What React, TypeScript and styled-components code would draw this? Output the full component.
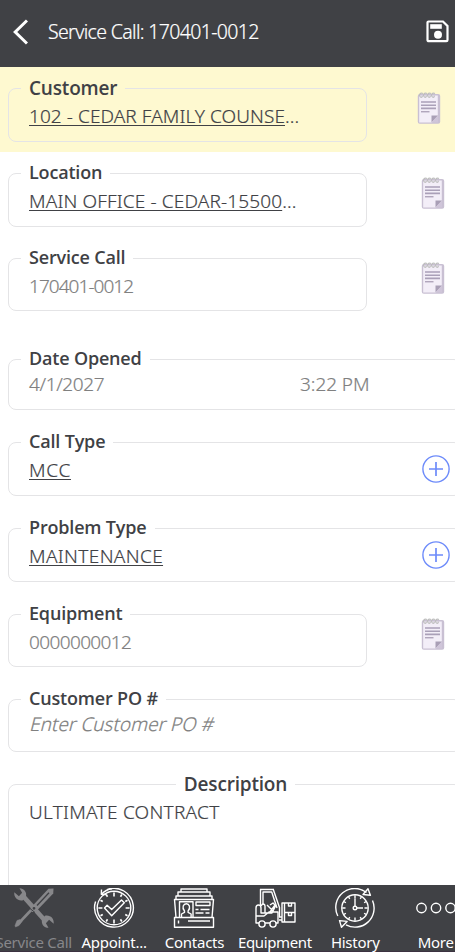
import React from 'react';
import styled, { createGlobalStyle, css } from 'styled-components';

const GlobalStyle = createGlobalStyle`
  *, *::before, *::after { box-sizing: border-box; }
  body { margin: 0; background: #fff; overflow: hidden; }
`;

const Screen = styled.div`
  display: flex;
  flex-direction: column;
  width: 455px;
  height: 952px;
  overflow: hidden;
  background: #fff;
  color: #404145;
  font-family: 'Open Sans', 'Noto Sans', sans-serif;
`;

const Header = styled.header`
  display: flex;
  align-items: center;
  flex: none;
  height: 67px;
  padding: 0 6px 4px 13px;
  background: #404145;
  color: #fff;
`;

const Title = styled.h1`
  flex: 1;
  margin: 1px 0 0 20px;
  font-family: 'Noto Sans', sans-serif;
  font-size: 19.5px;
  font-weight: 300;
  line-height: 28px;
  letter-spacing: -0.65px;
  white-space: nowrap;
  -webkit-text-stroke: 0.2px currentColor;
`;

const IconButton = styled.button`
  display: flex;
  flex: none;
  padding: 0;
  border: 0;
  background: none;
  color: inherit;
`;

const Form = styled.main`
  display: flex;
  flex-direction: column;
  flex: 1;
  min-height: 0;
  overflow: hidden;
`;

const Row = styled.section<{ $height: number; $active?: boolean }>`
  display: flex;
  justify-content: space-between;
  align-items: flex-start;
  flex: none;
  height: ${(p) => p.$height}px;
  padding: 11px ${(p) => (p.$active ? 14 : 10)}px 0 8px;
  background: ${(p) => (p.$active ? '#fef9d0' : 'transparent')};
`;

const Fieldset = styled.fieldset<{ $height: number; $wide?: boolean }>`
  flex: none;
  width: ${(p) => (p.$wide ? 454 : 359)}px;
  height: ${(p) => p.$height + 10}px;
  min-width: 0;
  margin: 0;
  padding: 0 11px 0 12px;
  border: 1px solid #e4e4e6;
  border-radius: 8px;
`;

const Legend = styled.legend<{ $large?: boolean; $centered?: boolean }>`
  height: 20px;
  padding: 0 8px;
  font-size: ${(p) => (p.$large ? 19 : 18)}px;
  font-weight: 600;
  line-height: ${(p) => (p.$large ? 21 : 19)}px;
  letter-spacing: -0.18px;
  white-space: nowrap;
  ${(p) => p.$centered && css`margin: 0 auto;`}
`;

const FieldBody = styled.div<{ $tight?: boolean }>`
  display: flex;
  align-items: flex-start;
  justify-content: space-between;
  padding: ${(p) => (p.$tight ? 2 : 5)}px 0 0 8px;
`;

const Value = styled.span<{ $spacing: number; $muted?: boolean; $half?: boolean }>`
  flex: ${(p) => (p.$half ? '0 0 271px' : '1')};
  font-family: 'Noto Sans', sans-serif;
  font-size: 19px;
  font-weight: 300;
  line-height: 26px;
  letter-spacing: ${(p) => p.$spacing}px;
  white-space: nowrap;
  color: ${(p) => (p.$muted ? '#808080' : '#404145')};
  -webkit-text-stroke: 0.2px currentColor;
`;

const Placeholder = styled(Value)`
  color: #808080;
  transform: skewX(-14deg);
  transform-origin: 0 20px;
`;

const Link = styled.a`
  text-decoration: underline;
  text-decoration-thickness: 1px;
  text-underline-offset: 2px;
  text-decoration-skip-ink: none;
`;

const NoteButton = styled(IconButton)`
  margin-top: 14px;
`;

const AddButton = styled(IconButton)`
  margin-top: -2px;
  color: #6d8bfa;
`;

const TabBar = styled.nav`
  display: flex;
  flex: none;
  height: 67px;
  margin-left: -6.5px;
  width: 483px;
  background: #404145;
  border-bottom: 1px solid #3c3240;
`;

const Tab = styled.div<{ $active?: boolean }>`
  display: flex;
  flex-direction: column;
  align-items: center;
  flex: none;
  width: 80.4px;
  padding-top: 3px;
  color: ${(p) => (p.$active ? '#87878a' : '#fff')};
`;

const TabLabel = styled.span<{ $spacing?: number }>`
  margin-top: 4px;
  font-family: 'Noto Sans', sans-serif;
  font-size: 15px;
  font-weight: 400;
  line-height: 20px;
  letter-spacing: ${(p) => p.$spacing ?? -0.25}px;
  white-space: nowrap;
`;

const BackIcon = () => (
  <svg width="15" height="28" viewBox="0 0 15 28" fill="none" stroke="currentColor" strokeWidth="3">
    <path d="M14 2.5 2.2 14 14 25.5" />
  </svg>
);

const SaveIcon = () => (
  <svg width="23" height="23" viewBox="0 0 23 23" fill="none">
    <path d="M2.5 1.5H17l4.5 4.5v14a1.2 1.2 0 0 1-1.2 1.2H2.7a1.2 1.2 0 0 1-1.2-1.2V2.5a1 1 0 0 1 1-1Z" stroke="currentColor" strokeWidth="2.2" />
    <path d="M4.2 4.2h11.6v4.6H4.2z" fill="currentColor" />
    <circle cx="12" cy="14.7" r="4" fill="currentColor" />
  </svg>
);

const NoteIcon = () => (
  <svg width="24" height="33" viewBox="0 0 24 33" fill="none">
    <rect x=".8" y="2" width="22.4" height="29.8" rx="2" fill="#c9c0d3" />
    <path d="M2.2 3.5h18.6V24l-6 6.4H2.2z" fill="#f3eef8" />
    <path d="M14.5 30.5v-7H21z" fill="#a99fb6" />
    <path d="M14.5 30.5 21 23.5v7z" fill="#cfc5d9" />
    <path d="M4 10h15M4 13.2h15M4 16.4h15" stroke="#aaa0b8" strokeWidth="1.6" />
    <path d="M4 19.8h8.5" stroke="#9488a3" strokeWidth="1" />
    {[3, 7, 11, 15].map((x) => (
      <path key={x} d={`M${x + 3} 1.5C${x} .2 ${x - 1} 3 ${x} 4.5s2.5.8 2.2-.8`} stroke="#bdbdbd" strokeWidth="1.2" />
    ))}
  </svg>
);

const AddIcon = () => (
  <svg width="28" height="28" viewBox="0 0 28 28" fill="none" stroke="currentColor" strokeWidth="1.4">
    <circle cx="14" cy="14" r="13.1" />
    <path d="M14 7v14M7 14h14" strokeWidth="1.7" />
  </svg>
);

const TabSvg = styled.svg.attrs({ width: 42, height: 40, viewBox: '0 0 42 40' })`
  flex: none;
  fill: none;
  stroke: currentColor;
  stroke-width: 1.4;
  stroke-linejoin: round;
`;

const ToolsIcon = () => (
  <TabSvg>
    <path d="M10.5 8.5 31 31.5" strokeWidth="4.6" />
    <path d="M6.5.3C11 .3 14 4 13 8.6L10 12.2C5 13.4.6 9.5 1.3 4.3l4.6 3.9 3.2-3.4Z" fill="currentColor" stroke="none" />
    <path d="M35.5 39.7c-4.5 0-7.5-3.7-6.5-8.3l3-3.6c5-1.2 9.4 2.7 8.7 7.9l-4.6-3.9-3.2 3.4Z" fill="currentColor" stroke="none" />
    <path d="m5 36 16-17" strokeWidth="2.6" />
    <path d="m2 37.5 2-5 3-1 2 2-3 4-3.5 1.5Z" fill="currentColor" strokeWidth=".5" />
    <path d="M17.5 20 35.5.8l5-.3-.3 5L23 23.5l-4 .5Z" fill="currentColor" stroke="none" />
    <path d="m24 17.5 12-12.8" stroke="#404145" strokeWidth="1.3" />
    <path d="m17 20.5 5 4" stroke="#404145" strokeWidth="1" />
    <circle cx="21" cy="20.3" r=".7" stroke="#404145" />
  </TabSvg>
);

const ticks = (count: number, outer: number, long: number, short: number) =>
  Array.from({ length: count }, (_, i) => {
    const a = (i * 2 * Math.PI) / count;
    const inner = outer - (i % 3 === 0 ? long : short);
    return `M${21 + outer * Math.sin(a)} ${20 - outer * Math.cos(a)}L${21 + inner * Math.sin(a)} ${20 - inner * Math.cos(a)}`;
  }).join('');

const AppointmentIcon = () => (
  <TabSvg>
    <path d="M14 1.6A19.4 19.4 0 1 1 2.6 13.5" />
    <circle cx="21" cy="20" r="16.8" />
    <path d={ticks(12, 15.6, 4, 2.6)} strokeWidth="1.6" />
    <path d="m8.5 1.5-.2 4.8 5 .2M8.5 6.2C11 3.5 15 1.3 19 .8" />
    <path d="m11.5 20 2.6-2.8 4.6 4.4L28.5 12l2.8 2.8-12.6 13Z" />
  </TabSvg>
);

const ContactsIcon = () => (
  <TabSvg>
    <path d="M8 4V1h26v3M5 8V4h32v4M3 11.5V8h36v3.5M3 29.5 1.5 11.5h39L39 29.5" />
    <path d="M1.5 29.5h39v9.7h-39zM6.5 29.5V13.8H20v15.7" />
    <path d="M8.5 29v-3l3-1.6V23c-3-4-1-7.2 1.8-7.2s4.8 3.2 1.8 7.2v1.4l3 1.6v3M23 14h14v3.5H23zM22.5 21.5h3m2 0h9M22.5 25h8m2 0h4M5.5 35.5v-3M15 33h22" />
  </TabSvg>
);

const ForkliftIcon = () => (
  <TabSvg>
    <path d="M6.5 18V1.5h12.8l6.2 18V29M9 17V4h8.7l5.3 16M6 1.5h14" />
    <path d="M2 20v15h3M2 28h8l5-4h9v11h-2M11 35h5M2 20c0-4 5-4 5 0v5h4v-7c0-2.5-3.5-3-3.5 0M11 25h7l4-8m-9 0 6 6m-3-6 3-2 2 2-5 7" />
    <circle cx="8" cy="36" r="3.1" /><circle cx="19" cy="36" r="3.1" />
    <path d="M28 15v19h2.5V15ZM25 29h3m-3 3h3M30.5 15H41v9.5H30.5M30.5 24.5H41V34H30.5M34.5 15v3h3v-3M34.5 24.5v3h3v-3" />
  </TabSvg>
);

const HistoryIcon = () => (
  <TabSvg>
    <path d="M3.8 28A19 19 0 0 1 32.5 4.5M38.5 12.5A19 19 0 0 1 12 36.8" />
    <path d="m34 .7 2.4 6.6-7.4-.8ZM7.5 39.3l-2-6.7 7.6.8Z" />
    <circle cx="21" cy="20" r="13.2" />
    <path d={ticks(12, 12.7, 3.2, 2.2)} />
    <path d="M21 10.5V18M23 20h6" /><circle cx="21" cy="20" r="1.8" />
  </TabSvg>
);

const MoreIcon = () => (
  <TabSvg>
    {[6.5, 21, 35.5].map((x) => <circle key={x} cx={x} cy="20" r="4.7" />)}
  </TabSvg>
);

const Note = () => <NoteButton aria-label="Notes"><NoteIcon /></NoteButton>;
const Add = () => <AddButton aria-label="Add"><AddIcon /></AddButton>;

export default function App() {
  return (
    <>
      <GlobalStyle />
      <Screen>
        <Header>
          <IconButton aria-label="Back"><BackIcon /></IconButton>
          <Title>Service Call: 170401-0012</Title>
          <IconButton aria-label="Save"><SaveIcon /></IconButton>
        </Header>
        <Form>
          <Row $height={85} $active>
            <Fieldset $height={54}>
              <Legend $large>Customer</Legend>
              <FieldBody><Value $spacing={0.08}><Link>102 - CEDAR FAMILY COUNSE</Link>...</Value></FieldBody>
            </Fieldset>
            <Note />
          </Row>
          <Row $height={85}>
            <Fieldset $height={54}>
              <Legend>Location</Legend>
              <FieldBody><Value $spacing={0.14}><Link>MAIN OFFICE - CEDAR-15500</Link>...</Value></FieldBody>
            </Fieldset>
            <Note />
          </Row>
          <Row $height={101}>
            <Fieldset $height={53}>
              <Legend>Service Call</Legend>
              <FieldBody><Value $muted $spacing={-0.95}>170401-0012</Value></FieldBody>
            </Fieldset>
            <Note />
          </Row>
          <Row $height={83}>
            <Fieldset $height={51} $wide>
              <Legend>Date Opened</Legend>
              <FieldBody $tight>
                <Value $muted $half $spacing={-0.38}>4/1/2027</Value>
                <Value $muted $spacing={-0.05}>3:22 PM</Value>
              </FieldBody>
            </Fieldset>
          </Row>
          <Row $height={86}>
            <Fieldset $height={54} $wide>
              <Legend>Call Type</Legend>
              <FieldBody><Value $spacing={0.7}><Link>MCC</Link></Value><Add /></FieldBody>
            </Fieldset>
          </Row>
          <Row $height={86}>
            <Fieldset $height={54} $wide>
              <Legend>Problem Type</Legend>
              <FieldBody><Value $spacing={0.36}><Link>MAINTENANCE</Link></Value><Add /></FieldBody>
            </Fieldset>
          </Row>
          <Row $height={85}>
            <Fieldset $height={53}>
              <Legend>Equipment</Legend>
              <FieldBody><Value $muted $spacing={-0.62}>0000000012</Value></FieldBody>
            </Fieldset>
            <Note />
          </Row>
          <Row $height={85}>
            <Fieldset $height={53} $wide>
              <Legend>Customer PO #</Legend>
              <FieldBody $tight><Placeholder $spacing={0}>Enter Customer PO #</Placeholder></FieldBody>
            </Fieldset>
          </Row>
          <Row $height={140}>
            <Fieldset $height={130} $wide>
              <Legend $large $centered>Description</Legend>
              <FieldBody><Value $spacing={0.27}>ULTIMATE CONTRACT</Value></FieldBody>
            </Fieldset>
          </Row>
        </Form>
        <TabBar>
          <Tab $active><ToolsIcon /><TabLabel>Service Call</TabLabel></Tab>
          <Tab><AppointmentIcon /><TabLabel>Appoint...</TabLabel></Tab>
          <Tab><ContactsIcon /><TabLabel>Contacts</TabLabel></Tab>
          <Tab><ForkliftIcon /><TabLabel $spacing={-0.35}>Equipment</TabLabel></Tab>
          <Tab><HistoryIcon /><TabLabel>History</TabLabel></Tab>
          <Tab><MoreIcon /><TabLabel>More</TabLabel></Tab>
        </TabBar>
      </Screen>
    </>
  );
}
